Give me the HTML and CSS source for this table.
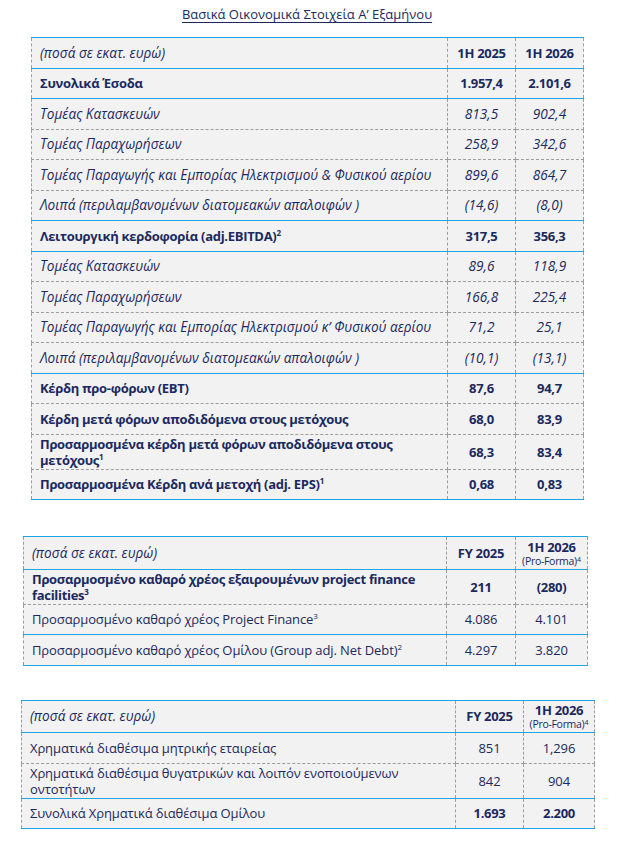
FILE: index.html
```html
<!DOCTYPE html>
<html lang="el">

<head>
  <meta charset="UTF-8">
  <title>Βασικά Οικονομικά Στοιχεία Α’ Εξαμήνου</title>
  <link rel="stylesheet" href="styles.css">
</head>

<body>
  <div class="report">
    <h1 class="title"><span>Βασικά Οικονομικά Στοιχεία Α’ Εξαμήνου</span></h1>

    <table class="fin fin-main">
      <colgroup><col class="c-label"><col class="c-num"><col class="c-num"></colgroup>
      <tr class="line">
        <td class="it">(ποσά σε εκατ. ευρώ)</td>
        <td class="num b">1H 2025</td>
        <td class="num b">1H 2026</td>
      </tr>
      <tr class="line">
        <td class="b">Συνολικά Έσοδα</td>
        <td class="num b">1.957,4</td>
        <td class="num b">2.101,6</td>
      </tr>
      <tr class="it">
        <td>Τομέας Κατασκευών</td>
        <td class="num">813,5</td>
        <td class="num">902,4</td>
      </tr>
      <tr class="it">
        <td>Τομέας Παραχωρήσεων</td>
        <td class="num">258,9</td>
        <td class="num">342,6</td>
      </tr>
      <tr class="it">
        <td>Τομέας Παραγωγής και Εμπορίας Ηλεκτρισμού &amp; Φυσικού αερίου</td>
        <td class="num">899,6</td>
        <td class="num">864,7</td>
      </tr>
      <tr class="it line">
        <td>Λοιπά (περιλαμβανομένων διατομεακών απαλοιφών )</td>
        <td class="num">(14,6)</td>
        <td class="num">(8,0)</td>
      </tr>
      <tr class="b line">
        <td>Λειτουργική κερδοφορία (adj.EBITDA)<sup>2</sup></td>
        <td class="num">317,5</td>
        <td class="num">356,3</td>
      </tr>
      <tr class="it">
        <td>Τομέας Κατασκευών</td>
        <td class="num">89,6</td>
        <td class="num">118,9</td>
      </tr>
      <tr class="it">
        <td>Τομέας Παραχωρήσεων</td>
        <td class="num">166,8</td>
        <td class="num">225,4</td>
      </tr>
      <tr class="it">
        <td>Τομέας Παραγωγής και Εμπορίας Ηλεκτρισμού κ’ Φυσικού αερίου</td>
        <td class="num">71,2</td>
        <td class="num">25,1</td>
      </tr>
      <tr class="it line">
        <td>Λοιπά (περιλαμβανομένων διατομεακών απαλοιφών )</td>
        <td class="num">(10,1)</td>
        <td class="num">(13,1)</td>
      </tr>
      <tr class="b">
        <td>Κέρδη προ-φόρων (EBT)</td>
        <td class="num">87,6</td>
        <td class="num">94,7</td>
      </tr>
      <tr class="b">
        <td>Κέρδη μετά φόρων αποδιδόμενα στους μετόχους</td>
        <td class="num">68,0</td>
        <td class="num">83,9</td>
      </tr>
      <tr class="b tall">
        <td>Προσαρμοσμένα κέρδη μετά φόρων αποδιδόμενα στους μετόχους<sup>1</sup></td>
        <td class="num">68,3</td>
        <td class="num">83,4</td>
      </tr>
      <tr class="b">
        <td>Προσαρμοσμένα Κέρδη ανά μετοχή (adj. EPS)<sup>1</sup></td>
        <td class="num">0,68</td>
        <td class="num">0,83</td>
      </tr>
    </table>

    <table class="fin fin-debt">
      <colgroup><col class="c-label"><col class="c-num"><col class="c-num2"></colgroup>
      <tr class="line head2">
        <td class="it">(ποσά σε εκατ. ευρώ)</td>
        <td class="num b">FY 2025</td>
        <td class="num"><span class="b">1H 2026</span><span class="pf">(Pro-Forma)<sup>4</sup></span></td>
      </tr>
      <tr class="b tall">
        <td>Προσαρμοσμένο καθαρό χρέος εξαιρουμένων project finance facilities<sup>3</sup></td>
        <td class="num">211</td>
        <td class="num">(280)</td>
      </tr>
      <tr class="line">
        <td>Προσαρμοσμένο καθαρό χρέος Project Finance<sup>3</sup></td>
        <td class="num">4.086</td>
        <td class="num">4.101</td>
      </tr>
      <tr>
        <td>Προσαρμοσμένο καθαρό χρέος Ομίλου (Group adj. Net Debt)<sup>2</sup></td>
        <td class="num">4.297</td>
        <td class="num">3.820</td>
      </tr>
    </table>

    <table class="fin fin-cash">
      <colgroup><col class="c-label"><col class="c-num"><col class="c-num2"></colgroup>
      <tr class="line head2">
        <td class="it">(ποσά σε εκατ. ευρώ)</td>
        <td class="num b">FY 2025</td>
        <td class="num"><span class="b">1H 2026</span><span class="pf">(Pro-Forma)<sup>4</sup></span></td>
      </tr>
      <tr>
        <td>Χρηματικά διαθέσιμα μητρικής εταιρείας</td>
        <td class="num">851</td>
        <td class="num">1,296</td>
      </tr>
      <tr class="line tall">
        <td>Χρηματικά διαθέσιμα θυγατρικών και λοιπόν ενοποιούμενων οντοτήτων</td>
        <td class="num">842</td>
        <td class="num">904</td>
      </tr>
      <tr>
        <td>Συνολικά Χρηματικά διαθέσιμα Ομίλου</td>
        <td class="num b">1.693</td>
        <td class="num b">2.200</td>
      </tr>
    </table>
  </div>
</body>

</html>
```

FILE: styles.css
```css
body {
  margin: 0;
  font-family: "Open Sans", "DejaVu Sans", sans-serif;
  color: #1b2960;
  background: #fff;
}

.report {
  padding-top: 5px;
}

.title {
  width: 552px;
  margin: 0 0 0 31px;
  text-align: center;
  font-size: 13px;
  font-weight: normal;
  line-height: 18px;
}

.title span {
  text-decoration: underline;
  text-underline-offset: 3px;
}

/* tables */
.fin {
  border-collapse: collapse;
  table-layout: fixed;
  background: #f2f2f2;
  font-size: 13px;
  letter-spacing: -0.1px;
}

.fin tr {
  height: 30.5px;
}

.fin tr.tall {
  height: 35px;
}

.fin tr.head2 {
  height: 32.5px;
}

.fin td {
  border: 1px dashed #9d9d9d;
  padding: 0 8px;
  line-height: 16px;
  vertical-align: middle;
}

.fin tr:first-child td {
  border-top: 1px solid #1ea6e0;
}

.fin tr:last-child td,
.fin tr.line td {
  border-bottom: 1px solid #1ea6e0;
}

.fin .num {
  text-align: center;
  padding: 0 2px;
}

.it {
  font-style: italic;
  font-size: 13.6px;
  letter-spacing: 0;
}

.b {
  font-weight: bold;
  font-size: 13px;
  letter-spacing: -0.3px;
}

.fin sup {
  font-size: 8px;
  line-height: 0;
  vertical-align: 5px;
  letter-spacing: 0;
}

.pf {
  display: block;
  font-size: 10.5px;
  line-height: 12px;
  font-weight: normal;
  letter-spacing: -0.3px;
}

.pf sup {
  font-size: 7px;
  vertical-align: 3px;
}

.head2 .num .b {
  display: block;
  line-height: 16px;
}

/* main table */
.fin-main {
  width: 552px;
  margin: 14px 0 0 31px;
}

.fin-main .c-label { width: 416px; }
.fin-main .c-num { width: 68px; }

/* net debt */
.fin-debt {
  width: 564px;
  margin: 36px 0 0 23px;
}

.fin-debt .c-label { width: 423px; }
.fin-debt .c-num { width: 69px; }
.fin-debt .c-num2 { width: 72px; }

/* cash */
.fin-cash {
  width: 573px;
  margin: 34px 0 0 21px;
}

.fin-cash .c-label { width: 434px; }
.fin-cash .c-num { width: 68px; }
.fin-cash .c-num2 { width: 71px; }
```
